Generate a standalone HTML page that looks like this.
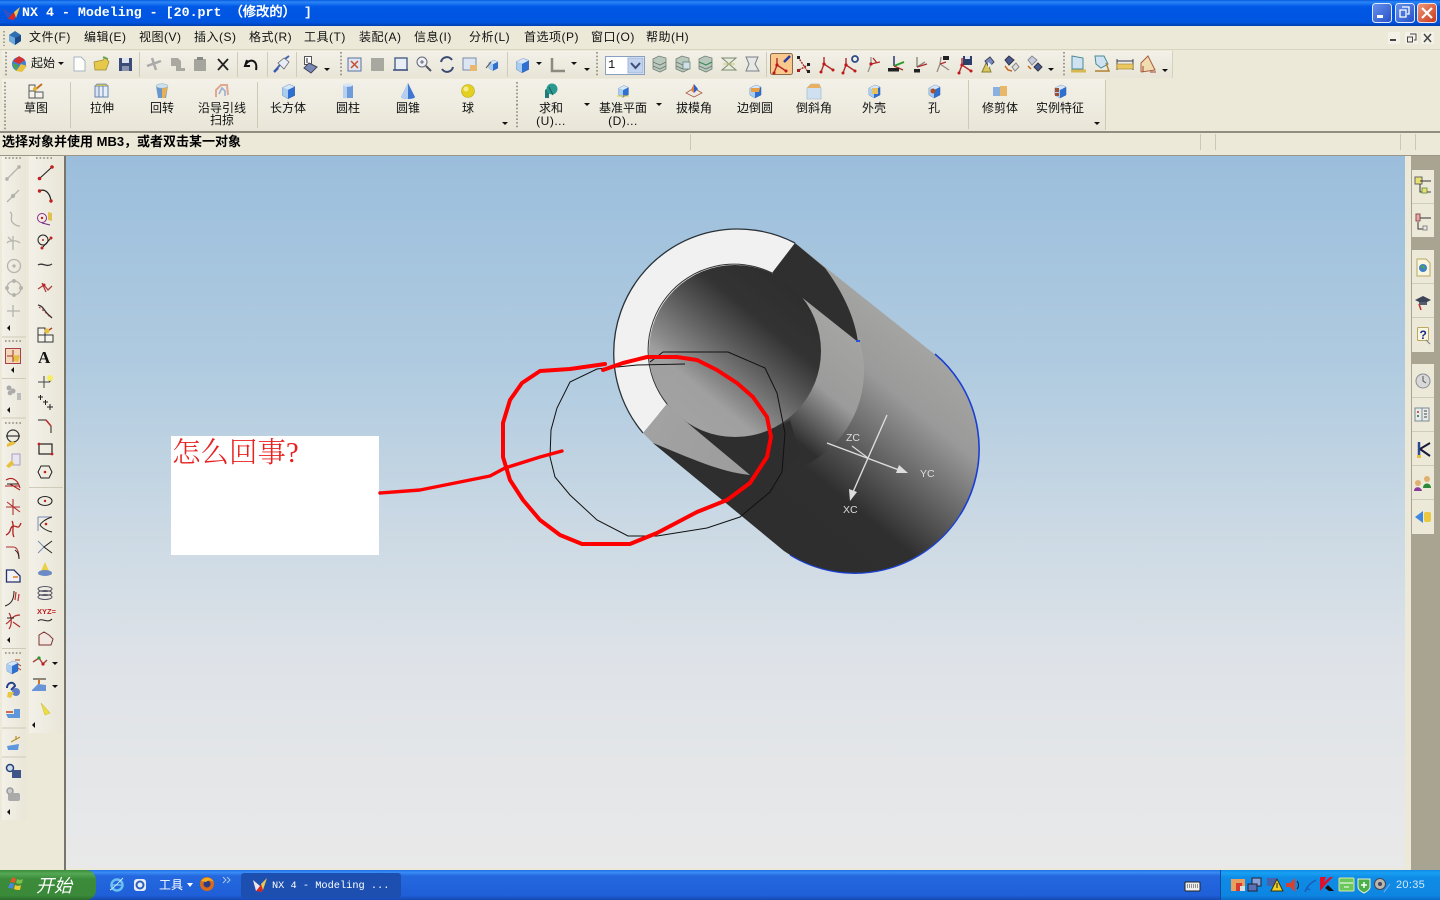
<!DOCTYPE html>
<html lang="zh"><head><meta charset="utf-8"><title>NX 4 - Modeling</title>
<style>
html,body{margin:0;padding:0;width:1440px;height:900px;overflow:hidden;background:#ece9d8}
body{position:relative;font-family:"Liberation Sans","WenQuanYi Zen Hei","Noto Sans CJK SC",sans-serif;font-size:12px;color:#111}
.b{position:absolute}
.t{position:absolute;white-space:nowrap;line-height:14px;font-size:12px}
.m{letter-spacing:.5px}
.c{transform:translateX(-50%);text-align:center}
svg{position:absolute;left:0;top:0}
</style></head><body>
<div class="b" style="left:0;top:0;width:1440px;height:26px;background:linear-gradient(#0a5be0 0,#2a86f5 8%,#0058e6 25%,#0055e0 85%,#0040b0 100%)"></div>
<div class="b" style="left:0;top:26px;width:1440px;height:24px;background:#ece9d8"></div>
<div class="b" style="left:0;top:49px;width:1440px;height:1px;background:#d8d4c2"></div>
<div class="b" style="left:2px;top:51px;width:1170px;height:27px;background:linear-gradient(#f3f1e8,#e8e5d7);border-right:1px solid #d5d1bf"></div>
<div class="b" style="left:2px;top:79px;width:1103px;height:52px;background:linear-gradient(#f3f1e8,#e9e6d8)"></div>
<div class="b" style="left:0;top:131px;width:1440px;height:2px;background:#8f8c80"></div>
<div class="b" style="left:0;top:133px;width:1440px;height:17px;background:#ece9d8"></div>
<div class="b" style="left:0;top:150px;width:1440px;height:6px;background:#ece9d8;border-bottom:1px solid #9a978a;box-sizing:border-box"></div>
<div class="b" style="left:690px;top:134px;width:1px;height:16px;background:#cbc8b8"></div>
<div class="b" style="left:1200px;top:134px;width:1px;height:16px;background:#cbc8b8"></div>
<div class="b" style="left:1215px;top:134px;width:1px;height:16px;background:#cbc8b8"></div>
<div class="b" style="left:1400px;top:134px;width:1px;height:16px;background:#cbc8b8"></div>
<div class="b" style="left:1415px;top:134px;width:1px;height:16px;background:#cbc8b8"></div>
<!-- left panels -->
<div class="b" style="left:0;top:156px;width:65px;height:714px;background:#ece9d8"></div>
<div class="b" style="left:64px;top:156px;width:2px;height:714px;background:#77756c"></div>
<div class="b" style="left:2px;top:156px;width:24px;height:664px;background:linear-gradient(90deg,#f3f1e8,#e9e6d8)"></div>
<div class="b" style="left:29px;top:156px;width:34px;height:577px;background:linear-gradient(90deg,#f3f1e8,#e9e6d8)"></div>
<!-- viewport -->
<div class="b" style="left:66px;top:156px;width:1339px;height:712px;background:linear-gradient(#9bbedc 0,#b0cbe0 30%,#cbd9e4 52%,#dfe3e8 72%,#e9e9e9 100%)"></div>
<div class="b" style="left:66px;top:868px;width:1345px;height:2px;background:#ece9d8"></div>
<!-- right panel -->
<div class="b" style="left:1405px;top:156px;width:6px;height:714px;background:#ece9d8"></div>
<div class="b" style="left:1411px;top:156px;width:29px;height:714px;background:#a8a491"></div>
<div class="b" style="left:1412px;top:170px;width:22px;height:33px;background:#ece9d8;border-bottom:1px solid #cfccbc"></div>
<div class="b" style="left:1412px;top:204px;width:22px;height:33px;background:#ece9d8"></div>
<div class="b" style="left:1412px;top:250px;width:22px;height:33px;background:#ece9d8;border-bottom:1px solid #cfccbc"></div>
<div class="b" style="left:1412px;top:284px;width:22px;height:33px;background:#ece9d8;border-bottom:1px solid #cfccbc"></div>
<div class="b" style="left:1412px;top:318px;width:22px;height:34px;background:#ece9d8"></div>
<div class="b" style="left:1412px;top:364px;width:22px;height:33px;background:#ece9d8;border-bottom:1px solid #cfccbc"></div>
<div class="b" style="left:1412px;top:398px;width:22px;height:33px;background:#ece9d8;border-bottom:1px solid #cfccbc"></div>
<div class="b" style="left:1412px;top:432px;width:22px;height:33px;background:#ece9d8;border-bottom:1px solid #cfccbc"></div>
<div class="b" style="left:1412px;top:466px;width:22px;height:33px;background:#ece9d8;border-bottom:1px solid #cfccbc"></div>
<div class="b" style="left:1412px;top:500px;width:22px;height:34px;background:#ece9d8"></div>
<!-- taskbar -->
<div class="b" style="left:0;top:870px;width:1440px;height:30px;background:linear-gradient(#1f6fe8 0,#3a8cf5 8%,#2468de 20%,#1f5fd8 85%,#1848b0 100%)"></div>
<div class="b" style="left:0;top:870px;width:96px;height:30px;border-radius:0 10px 10px 0;background:linear-gradient(#3a8f3a 0,#55a855 12%,#3b8b3b 30%,#3a8a3a 85%,#2a6a2a 100%)"></div>
<div class="b" style="left:241px;top:873px;width:160px;height:25px;border-radius:3px;background:#1c4fb0"></div>
<div class="b" style="left:1220px;top:870px;width:220px;height:30px;background:linear-gradient(#0e8be8 0,#18a0f2 10%,#0f8ce6 25%,#0d86e2 85%,#0a6cc8 100%);border-left:1px solid #0a4aa0;box-sizing:border-box"></div>

<svg width="1440" height="900" viewBox="0 0 1440 900" xmlns="http://www.w3.org/2000/svg">
<defs>
<linearGradient id="gb" gradientUnits="userSpaceOnUse" x1="934" y1="354" x2="776" y2="546"><stop offset="0" stop-color="#a4a4a2"/><stop offset=".22" stop-color="#9a9a9a"/><stop offset=".68" stop-color="#2f2f2f"/><stop offset="1" stop-color="#2e2e2e"/></linearGradient>
<linearGradient id="gh" gradientUnits="userSpaceOnUse" x1="680" y1="417" x2="790" y2="285"><stop offset="0" stop-color="#a2a2a2"/><stop offset=".2" stop-color="#a0a0a0"/><stop offset=".3" stop-color="#888"/><stop offset=".55" stop-color="#555"/><stop offset=".73" stop-color="#333"/><stop offset="1" stop-color="#2e2e2e"/></linearGradient>
<linearGradient id="gc" gradientUnits="userSpaceOnUse" x1="860" y1="330" x2="780" y2="427"><stop offset="0" stop-color="#a6a6a4"/><stop offset=".55" stop-color="#9b9b9b"/><stop offset="1" stop-color="#2f2f2f"/></linearGradient>
<linearGradient id="gw" gradientUnits="userSpaceOnUse" x1="650" y1="420" x2="750" y2="480"><stop offset="0" stop-color="#a2a2a2"/><stop offset="1" stop-color="#9c9c9c"/></linearGradient>
<linearGradient id="tb" x1="0" y1="0" x2="1" y2="1"><stop offset="0" stop-color="#6a93ea"/><stop offset="1" stop-color="#2450c8"/></linearGradient>
<linearGradient id="tr" x1="0" y1="0" x2="1" y2="1"><stop offset="0" stop-color="#ef9a7a"/><stop offset="1" stop-color="#c8361a"/></linearGradient>
<g id="cube"><path d="M-5 -3 L1 -6 L6 -4 L6 4 L0 7 L-5 4Z" fill="#2f6fd0" stroke="#2a5aa8" stroke-width=".5"/><path d="M-5 -3 L0 -1 L0 7 L-5 4Z" fill="#a9cdf0"/><path d="M-5 -3 L1 -6 L6 -4 L0 -1Z" fill="#d5e6f7"/></g>
<g id="csy"><path d="M-3 -1 L-6 7 M-3 -1 L6 5 M-3 -1 L-3 -8" stroke="#b02c2c" stroke-width="1.400" fill="none"/><circle cx="-3" cy="-1" r="1.600" fill="#c01818"/><circle cx="-6" cy="7" r="1.500" fill="#c01818"/><circle cx="6" cy="5" r="1.500" fill="#c01818"/></g>
<g id="stk"><path d="M-7 -5 L-1 -8 L6 -6 L6 5 L0 8 L-7 5Z" fill="#b8c8bc" stroke="#727e74" stroke-width=".8"/><path d="M-7 -2 L0 1 L6 -2 M-7 2 L0 5 L6 2" stroke="#6c786e" fill="none" stroke-width=".9"/></g>
<g id="grip"><path d="M0 0 V24" stroke="#8a8878" stroke-width="1.6" stroke-dasharray="1.6 2"/></g>
<g id="gh2"><path d="M0 0 H18" stroke="#8a8878" stroke-width="1.4" stroke-dasharray="1.6 2"/></g>
<path id="ad" d="M-3 0 H3 L0 3Z" fill="#111"/>
<path id="al" d="M2 -3 V3 L-1 0Z" fill="#111"/>
</defs>

<!-- 3D model -->
<path d="M795 243 L933 353 A124 124 0 0 1 784 551 L653 443 Z" fill="url(#gb)"/>
<clipPath id="cb"><path d="M795 243 L933 353 A124 124 0 0 1 784 551 L643 433 L667 403 L773 272Z"/></clipPath>
<circle cx="759" cy="371" r="105" fill="url(#gc)" clip-path="url(#cb)"/>
<path d="M653 443 L660 410 L735 470 L784 480 L720 498Z" fill="#2e2e2e"/>
<path d="M678 415 C695 430 715 438 735 437 C755 437 775 431 790 420 L800 455 L775 476 L750 475Z" fill="#2e2e2e"/>
<path d="M795 243 A124 124 0 0 0 643 433 L667 404 L772 273 Z" fill="#f1f1f1"/>
<path d="M795 243 A124 124 0 0 0 643 433" fill="none" stroke="#2a3238" stroke-width="1.300"/>
<circle cx="735" cy="351" r="86" fill="url(#gh)"/>
<path d="M772 273 A86 86 0 0 0 667 404" fill="none" stroke="#333" stroke-width="1"/>
<path d="M795 243 L772 273 L780 280 L858 342 C855 320 845 295 825 268 Z" fill="#2f2f2f"/>
<path d="M678 415 L750 475 C720 472 690 458 653 443 L643 433 L667 404Z" fill="url(#gw)"/>
<path d="M935 354 A124 124 0 0 1 960 515" fill="none" stroke="#1a3fd0" stroke-width="1.600"/>
<path d="M960 515 A124 124 0 0 1 790 555" fill="none" stroke="#1a3fd0" stroke-width="1.300"/>
<rect x="856" y="340" width="4" height="2" fill="#2a4fe0"/>
<path d="M827 443 L899 470" stroke="#ddd" stroke-width="1.400"/><path d="M908 473 L896 473 L899 465Z" fill="#ddd"/>
<path d="M887 415 L853 492" stroke="#ddd" stroke-width="1.400"/><path d="M850 501 L849 489 L857 492Z" fill="#ddd"/>
<path d="M852 446 L868 458" stroke="#ddd" stroke-width="1.100"/>
<text x="846" y="441" font-family="Liberation Sans" font-size="10.500" fill="#dcdcdc">ZC</text>
<text x="920" y="477" font-family="Liberation Sans" font-size="10.500" fill="#dcdcdc">YC</text>
<text x="843" y="513" font-family="Liberation Sans" font-size="10.500" fill="#dcdcdc">XC</text>
<path d="M685 364 L637 365 L597 369 L570 382 L557 408 L551 430 L550 457 L555 477 L570 495 L597 520 L628 536 L657 536 L707 528 L740 517 L770 492 L782 472 L785 433 L777 393 L765 368 L728 352 L663 352 L650 362" fill="none" stroke="#111" stroke-width="1"/>
<rect x="171" y="436" width="208" height="119" fill="#fff"/>
<path d="M380 493 L420 490 L460 482 L490 476 L505 468 L540 457 L562 451" fill="none" stroke="#f00" stroke-width="3.400" stroke-linecap="round" stroke-linejoin="round"/>
<path d="M605 364 L570 369 L540 371 L522 383 L510 400 L503 423 L503 457 L510 480 L523 500 L540 520 L560 535 L582 544 L630 544 L657 533 L697 512 L727 500 L750 483 L767 457 L771 437 L767 417 L753 397 L737 383 L717 370 L697 360 L677 357 L647 357 L623 363 L603 370" fill="none" stroke="#f00" stroke-width="4" stroke-linecap="round" stroke-linejoin="round"/>

<!-- title bar -->
<path d="M3 9 L12 14 L20 7 L14 20 L8 19Z" fill="#d62828"/><path d="M3 9 L12 14 L8 19Z" fill="#2a55c8"/><path d="M14 12 L20 7 L16 18Z" fill="#e8c850"/>
<rect x="1372.500" y="3.500" width="19" height="19" rx="3" fill="url(#tb)" stroke="#dfe8ff"/><rect x="1377" y="15" width="6" height="3" fill="#fff"/>
<rect x="1395.500" y="3.500" width="19" height="19" rx="3" fill="url(#tb)" stroke="#dfe8ff"/><path d="M1402 7h7v7h-2M1400 10h6v7h-6z" fill="none" stroke="#fff" stroke-width="1.300"/>
<rect x="1417.500" y="3.500" width="19" height="19" rx="3" fill="url(#tr)" stroke="#f5e0d8"/><path d="M1422 8 L1432 18 M1432 8 L1422 18" stroke="#fff" stroke-width="2.200"/>
<!-- MDI -->
<rect x="1388" y="32" width="12" height="12" fill="#f4f2e8"/><rect x="1390" y="39" width="6" height="2" fill="#444"/>
<rect x="1405" y="32" width="13" height="12" fill="#f4f2e8"/><path d="M1410 34h6v6h-2M1407.500 37h5v5h-5z" fill="none" stroke="#444"/>
<rect x="1421" y="32" width="13" height="12" fill="#f4f2e8"/><path d="M1424 34 L1431 42 M1431 34 L1424 42" stroke="#444" stroke-width="1.500"/>
<!-- menu grip + icon -->
<path d="M4 31 V46" stroke="#8a8878" stroke-width="1.500" stroke-dasharray="1.500 2"/>
<g transform="translate(15,38)"><path d="M-6 -3 L0 -7 L6 -3 L6 3 L0 7 L-6 3Z" fill="#2f6fb0"/><path d="M-6 -3 L0 0 L0 7 L-6 3Z" fill="#6fa8dc"/><path d="M0 0 L6 -3 L6 3 L0 7Z" fill="#1a4a88"/></g>

<!-- toolbar row -->
<use href="#grip" x="6" y="52"/>
<g transform="translate(19,64)"><circle r="7" fill="#3f7fd0"/><path d="M-6 -3 L0 -8 L6 -4 L0 0Z" fill="#d83030"/><path d="M-3 7 L2 0 L8 2 L3 8Z" fill="#e8c040"/><path d="M-7 -1 L-1 1 L-3 7Z" fill="#48a848"/></g>
<use href="#ad" x="61" y="62"/>
<path d="M74 57 H81 L85 61 V71 H74Z" fill="#fdfdfa" stroke="#a8b4c0"/>
<path d="M94 62 L103 60 L105 57 L109 62 L106 70 L95 70Z" fill="#e6c84a" stroke="#9a8830" stroke-width=".7"/><path d="M103 57 L108 59" stroke="#5aa050" stroke-width="1.500"/>
<rect x="119" y="58" width="13" height="13" fill="#3c4c78"/><rect x="122" y="58" width="7" height="5" fill="#dfe4ee"/><rect x="122" y="66" width="7" height="5" fill="#8a94b0"/>
<path d="M147 66 L161 61 M152 58 L156 70" stroke="#aaa" stroke-width="2.500"/>
<path d="M171 58 h7 l3 3 v7 h4 v3 h-9 v-5 h-5z" fill="#a9a9a2"/>
<path d="M194 59 h12 v12 h-12z" fill="#a5a59e"/><rect x="197" y="57" width="6" height="3" fill="#888"/>
<path d="M218 59 L228 70 M228 59 L218 70" stroke="#222" stroke-width="1.800"/>
<path d="M247 60 L245 66 L250 66 M246 64 C250 58 258 60 256 70" fill="none" stroke="#111" stroke-width="2"/>
<path d="M275 71 L279 66 L285 59 L289 56" stroke="#4466b8" stroke-width="2" fill="none"/><path d="M278 63 L284 69 L289 62 L284 58Z" fill="#e8ecf4" stroke="#667" stroke-width=".8"/><path d="M274 72 L278 68" stroke="#3858b0" stroke-width="2.500"/>
<rect x="304.500" y="56.500" width="7" height="8" fill="#fff" stroke="#555"/><path d="M307 58 v5" stroke="#222"/><path d="M309 63 L317 67 L311 73 L304 68Z" fill="#7a8ab8" stroke="#445"/>
<use href="#ad" x="327" y="68"/>
<path d="M139.500 52V77M237.500 52V77M267.500 52V77M296.500 52V77M507.500 52V77M766.500 52V77" stroke="#cfcbb8"/>
<use href="#grip" x="341" y="52"/><use href="#grip" x="597" y="52"/><use href="#grip" x="1064" y="52"/>
<rect x="348" y="58" width="13" height="13" fill="#dfe6f0" stroke="#5870a0"/><path d="M351 61 L358 68 M358 61 L351 68" stroke="#c85030" stroke-width="1.500"/>
<rect x="371" y="58" width="13" height="13" fill="#a8a8a0"/>
<rect x="395" y="58" width="12" height="12" fill="#e8eef6" stroke="#40557e" stroke-width="1.300"/><path d="M393 70 h15" stroke="#40557e" stroke-width="1.500"/>
<circle cx="422" cy="62" r="5" fill="#eef2f6" stroke="#667"/><path d="M426 66 L431 71" stroke="#556" stroke-width="2"/><path d="M420 62h4M422 60v4" stroke="#667"/>
<path d="M452 60 A6 6 0 0 0 441 62 M442 69 A6 6 0 0 0 453 67" fill="none" stroke="#3a4a70" stroke-width="2"/>
<rect x="463" y="58" width="13" height="12" fill="#dce6f2" stroke="#7a8aa8"/><path d="M470 65 h7 v6 h-7z" fill="#e8b870"/>
<g transform="translate(493,65) scale(.8)"><use href="#cube"/></g><path d="M486 68 L491 62" stroke="#555"/>
<g transform="translate(522,65) scale(1.100)"><use href="#cube"/></g><use href="#ad" x="539" y="62"/>
<path d="M552 58 V71 H565" fill="none" stroke="#8a8a80" stroke-width="2.500"/><use href="#ad" x="574" y="62"/><use href="#ad" x="587" y="68"/>
<rect x="605.500" y="56.500" width="39" height="18" fill="#fff" stroke="#8aa0c0"/><rect x="628" y="58" width="15" height="15" fill="#c2d3f0" stroke="#a0b4d8"/><path d="M631 63 L635.500 68 L640 63" fill="none" stroke="#3d4f78" stroke-width="2"/>
<use href="#stk" x="660" y="64"/><use href="#stk" x="683" y="64"/><rect x="683" y="62" width="7" height="7" fill="#cfe0e8" stroke="#5a7a6a" stroke-width=".7"/><g transform="translate(706,64)"><use href="#stk"/><path d="M-7 -2 L0 1 L6 -2" stroke="#3a8a5a" fill="none"/></g>
<g transform="translate(729,64)"><path d="M-7 -6 L7 -6 L0 0Z M-7 6 L7 6 L0 0Z" fill="#e8ecd8" stroke="#7a8a72"/><path d="M-6 0 H6" stroke="#c8c870"/></g>
<g transform="translate(752,64)"><path d="M-6 -7 H6 L3 0 L7 7 H-6 L-3 0Z" fill="#e6e8e6" stroke="#7a8088"/></g>
<rect x="770.500" y="53.500" width="22" height="21" rx="2" fill="#f8c88c" stroke="#8a6a48"/>
<use href="#csy" x="780" y="66"/><path d="M784 62 L790 56" stroke="#2a3aa0" stroke-width="2.500"/>
<g transform="translate(804,65)"><path d="M-6 -8 L4 7 M-5 5 L6 -1" stroke="#a02020" fill="none" stroke-dasharray="2 1" stroke-width="1.400"/><rect x="-7" y="-9" width="3" height="3" fill="#222"/><rect x="3" y="5" width="3" height="3" fill="#222"/><rect x="-7" y="4" width="3" height="3" fill="#a02020"/><rect x="3" y="-2" width="3" height="3" fill="#222"/></g>
<use href="#csy" x="827" y="65"/><use href="#csy" x="849" y="66"/><circle cx="855" cy="59" r="3" fill="none" stroke="#2a4a88" stroke-width="1.800"/>
<g transform="translate(874,65)"><path d="M-3 -1 L-6 7 M-3 -1 L-3 -8" stroke="#9a9a90" stroke-width="1.400" fill="none"/><path d="M-3 -1 L6 -3 M-1 -7 L3 -2" stroke="#b02c2c" stroke-width="1.400" fill="none"/><circle cx="-3" cy="-1" r="1.600" fill="#c01818"/></g>
<g transform="translate(897,64)"><path d="M-3 -8 V2" stroke="#1a2a6a" stroke-width="1.400"/><path d="M-3 2 L7 -2" stroke="#2a9a2a" stroke-width="1.800"/><path d="M-3 2 L6 6" stroke="#b02c2c" stroke-width="1.400"/><rect x="-9" y="4" width="11" height="3.500" fill="#222"/></g>
<g transform="translate(920,65)"><path d="M-3 -8 V2 M-3 2 L5 -3" stroke="#8a8a84" stroke-width="1.400"/><path d="M-3 2 L7 -1" stroke="#b02c2c" stroke-width="1.400"/><rect x="-6" y="4" width="6" height="3.500" fill="#222"/></g>
<g transform="translate(943,65)"><path d="M-3 -1 L-6 7 M-3 -1 L-2 -8 M-3 -1 L6 5" stroke="#9a8a84" stroke-width="1.300" fill="none"/><path d="M-3 -1 L3 -3" stroke="#b02c2c" stroke-width="1.400"/><rect x="0" y="-9" width="6" height="4" fill="#222"/></g>
<use href="#csy" x="965" y="66"/><rect x="963" y="56" width="9" height="9" fill="#2c3e6a"/><rect x="965" y="56" width="5" height="3" fill="#dfe4ee"/>
<g transform="translate(988,65)"><path d="M-6 7 L-1 -4 L3 7Z" fill="#d8c860" stroke="#8a8030"/><path d="M-3 -4 L2 -8 L6 -3 L1 2Z" fill="#7a8ac0" stroke="#445"/><path d="M0 -3 L4 0 L0 3Z" fill="#e8f0f8"/></g>
<g transform="translate(1011,64)"><path d="M-6 -4 L-2 -8 L3 -4 L-2 1Z" fill="#4a5a90" stroke="#334"/><path d="M1 3 L5 -1 L8 3 L4 7Z" fill="#dcdcd8" stroke="#888"/><path d="M-6 2 L-3 6 L1 7" stroke="#c86820" stroke-width="1.500" fill="none"/></g>
<g transform="translate(1034,64)"><path d="M-6 -4 L-2 -8 L3 -4 L-2 1Z" fill="#c8ccd8" stroke="#889"/><path d="M0 3 L4 -1 L8 3 L4 7Z" fill="#4a5a90" stroke="#334"/><path d="M-6 2 L-3 5" stroke="#c86820" stroke-width="1.500" fill="none"/></g>
<use href="#ad" x="1051" y="68"/>
<g transform="translate(1078,64)"><path d="M-6 -8 L5 -6 L5 5 L-6 5Z" fill="#cfe2f2" stroke="#4a8a98"/><path d="M-7 7 H8" stroke="#d8b850" stroke-width="3"/></g>
<g transform="translate(1101,64)"><path d="M-6 -8 L3 -8 L7 0 L0 4 L-5 0Z" fill="#cfe2f2" stroke="#4a8a98"/><path d="M-6 7 H8 L5 -1" stroke="#b08030" stroke-width="1.400" fill="none"/></g>
<path d="M1117 59 V70 M1133 59 V70" stroke="#444"/><path d="M1117 61 H1133" stroke="#335"/><rect x="1117" y="64" width="16" height="5" fill="#ecc860" stroke="#a08030" stroke-width=".6"/>
<path d="M1141 72 L1141 63 L1148 56 L1155 70 L1141 72" fill="#f0dcae" stroke="#a86040"/><path d="M1143 72 L1143 66 M1150 72 H1156" stroke="#a04030"/>
<use href="#ad" x="1165" y="69"/>

<!-- feature toolbar -->
<use href="#grip" x="5" y="82"/><use href="#grip" x="5" y="106"/>
<g transform="translate(36,91)"><rect x="-7" y="-6" width="6" height="6" fill="#f4f4ec" stroke="#555"/><rect x="-7" y="0" width="6" height="7" fill="#f4f4ec" stroke="#555"/><rect x="-1" y="1" width="8" height="6" fill="#f4f4ec" stroke="#555"/><path d="M0 -2 L6 -7" stroke="#c07020" stroke-width="2"/><circle cx="-1" cy="-2" r="2" fill="#e0b030"/></g>
<g transform="translate(102,91)"><rect x="-7" y="-5" width="4" height="11" fill="#d8e4f2" stroke="#6a84b0"/><rect x="-3" y="-5" width="9" height="11" fill="#e6eef8" stroke="#6a84b0"/><path d="M1 -5 V6" stroke="#6a84b0"/><path d="M-7 -5 L-5 -7 H4 L6 -5" fill="#c8c060" stroke="#6a84b0" stroke-width=".7"/></g>
<g transform="translate(162,91)"><path d="M-6 -5 H6 L4 7 H-4Z" fill="#6a96d0"/><path d="M0 -5 H6 L3 7 H0Z" fill="#e8b050"/><ellipse cy="-5" rx="6" ry="2.200" fill="#cfe0f0" stroke="#8aa" stroke-width=".5"/></g>
<g transform="translate(222,91)"><path d="M-6 6 L-6 -1 L-1 -6 L5 -6 L6 4" fill="none" stroke="#e0a890" stroke-width="2"/><path d="M-3 3 L0 -3 L3 0 L3 5" fill="none" stroke="#9ab0d0" stroke-width="1.600"/></g>
<g transform="translate(288,91) scale(1.100)"><use href="#cube"/></g>
<g transform="translate(348,91)"><rect x="-5" y="-6" width="10" height="13" fill="#6d9bdc"/><rect x="-5" y="-6" width="4" height="13" fill="#b7d0f0"/><ellipse cy="-6" rx="5" ry="1.700" fill="#d9e6f6"/></g>
<g transform="translate(408,91)"><path d="M0 -8 L7 6 A7 2 0 0 1 -7 6Z" fill="#3f78d0"/><path d="M0 -8 L0 8 A7 2 0 0 1 -7 6Z" fill="#b4cff0"/></g>
<circle cx="468" cy="91" r="6.500" fill="#e4d020" stroke="#b8a820" stroke-width=".6"/><circle cx="466" cy="89" r="2.500" fill="#f6ec90"/>
<use href="#ad" x="505" y="122"/>
<path d="M70.500 82V128M257.500 82V128M968.500 80V129M1105.500 80V130" stroke="#cdc9b6"/>
<use href="#grip" x="517" y="82"/><use href="#grip" x="517" y="104"/>
<g transform="translate(551,91)"><path d="M-6 -1 L-2 -4 L-2 7 L-6 7Z" fill="#1f7a78"/><circle cx="1" cy="-2" r="5.500" fill="#2a9a90"/><path d="M-2 -4 L2 4" stroke="#175c5a"/></g>
<use href="#ad" x="587" y="103"/>
<g transform="translate(623,91) scale(.9)"><use href="#cube"/></g><path d="M617 96 L629 96" stroke="#e0c840"/>
<use href="#ad" x="659" y="103"/>
<g transform="translate(694,90)"><path d="M-8 3 L0 -2 L8 3 L0 7Z" fill="#f0e8e0" stroke="#a86040" stroke-width=".8"/><path d="M-3 0 L0 -6 L4 -1 L0 3Z" fill="#2f5fc8"/><path d="M-3 0 L0 -6 L0 3Z" fill="#e08040"/></g>
<g transform="translate(755,91)"><use href="#cube"/><path d="M-4 -3 L5 -3 L4 1 L-4 1Z" fill="#e8a040"/></g>
<g transform="translate(814,91)"><path d="M-7 -3 L-3 -7 L5 -7 L7 -3 L7 8 L-7 8Z" fill="#cfe0f0" stroke="#9ab0c8" stroke-width=".6"/><path d="M-7 -3 L-3 -7 L5 -7 L7 -3Z" fill="#e8b060"/></g>
<g transform="translate(874,91)"><use href="#cube"/><path d="M-2 -3 L4 -3 L4 3 L-2 3Z" fill="#e8c060"/></g>
<g transform="translate(934,91)"><use href="#cube"/><circle cx="-1" cy="0" r="2.500" fill="#b05020"/></g>
<g transform="translate(1000,91)"><rect x="-7" y="-4" width="7" height="9" fill="#8ab0e0"/><rect x="0" y="-5" width="7" height="10" fill="#e8b868"/></g>
<g transform="translate(1060,91)"><use href="#cube"/><rect x="-5" y="-3" width="4" height="4" fill="#a05030"/><rect x="-5" y="2" width="4" height="3" fill="#a05030"/></g>
<use href="#ad" x="1097" y="122"/>

<!-- left col 1 -->
<use href="#gh2" x="5" y="158"/>
<g stroke="#b5b5ae" fill="none" stroke-width="1.300">
<path d="M7 179 L19 167"/><circle cx="19" cy="167" r="1.200" fill="#aaa"/><circle cx="7" cy="179" r="1.200" fill="#aaa"/>
<path d="M7 202 L19 190"/><circle cx="13" cy="196" r="1.500" fill="#aaa"/>
<path d="M10 212 C14 214 9 220 13 223 C16 226 18 226 20 226"/>
<path d="M7 243 C9 240 17 240 20 243 M13 236 V250 M8 237 L13 242"/>
<circle cx="14" cy="266" r="6.500"/><circle cx="14" cy="266" r="1" fill="#aaa"/>
<circle cx="14" cy="288" r="7"/><circle cx="14" cy="281" r="1.300" fill="#aaa"/><circle cx="14" cy="295" r="1.300" fill="#aaa"/><circle cx="7" cy="288" r="1.300" fill="#aaa"/><circle cx="21" cy="288" r="1.300" fill="#aaa"/>
<path d="M7 311 H20 M13 305 V317"/>
</g>
<use href="#al" x="8" y="328"/>
<path d="M2 337 H26 M2 378.500 H26 M2 418 H26 M2 648.500 H26 M2 728 H26 M2 757 H26" stroke="#cfcbb8"/>
<use href="#gh2" x="5" y="341"/>
<rect x="5.500" y="348.500" width="15" height="15" fill="#f3d8b8" stroke="#a84050"/><path d="M7 356 H19 M13 350 V362" stroke="#a03030"/><path d="M13 355 L20 356 L18 362 L14 361Z" fill="#e8c040"/>
<use href="#al" x="12" y="370"/>
<g fill="#aaa"><circle cx="9" cy="388" r="2.500"/><circle cx="13" cy="391" r="2.500"/><circle cx="10" cy="393" r="2.300"/><rect x="17" y="393" width="4" height="7" fill="#bbb"/></g>
<use href="#al" x="8" y="410"/>
<use href="#gh2" x="5" y="423"/>
<g fill="none" stroke="#333" stroke-width="1.200"><circle cx="13" cy="436" r="6"/><path d="M6 436 H20"/></g><path d="M7 444 L12 441 L16 443 L13 445 L7 447Z" fill="#e8c040"/>
<rect x="12" y="454" width="8" height="11" fill="#e8e4f0" stroke="#a8a0c0" /><path d="M6 466 L12 460 L14 464 L9 468Z" fill="#e8c040"/>
<path d="M6 480 C12 476 18 480 20 488 M5 486 H19 M10 484 L20 490" fill="none" stroke="#b02020" stroke-width="1.100"/><path d="M7 484 H18" stroke="#222"/>
<path d="M13 499 V515 M6 507 H20 M7 502 L20 512" stroke="#b03030" fill="none" stroke-width="1.100"/>
<path d="M6 535 C12 532 9 528 13 526 C18 526 18 530 21 523 M12 521 C15 526 11 532 14 537" stroke="#b02020" fill="none" stroke-width="1.300"/>
<path d="M6 547 H13 C17 547 19 551 19 559" stroke="#b03030" fill="none" stroke-width="1"/><path d="M15 550 C18 552 19 555 19 559" stroke="#222" fill="none"/>
<path d="M6.500 570 H14 L20 576 V582 H6.500Z" fill="#f2f2f6" stroke="#23306a" stroke-width="1.300"/><path d="M13 577 h5" stroke="#d88020" stroke-width="1.500"/>
<path d="M5 606 C11 604 14 600 14 591" stroke="#222" fill="none"/><path d="M16 592 L15 600 M19 594 L18 601" stroke="#c03030" stroke-width="1.200"/>
<path d="M6 624 C12 620 12 615 20 615 M13 622 L20 627 M9 613 C12 617 12 625 9 629" stroke="#b03030" fill="none" stroke-width="1.200"/><path d="M7 618 H14" stroke="#222"/>
<use href="#al" x="8" y="640"/>
<use href="#gh2" x="5" y="653"/>
<use href="#cube" x="12" y="667"/><path d="M15 660 L20 660 M18 664 L21 666 M18 668 L21 670" stroke="#b04020"/>
<path d="M7 688 C7 682 14 681 15 686 L11 690" fill="none" stroke="#24408a" stroke-width="2"/><circle cx="16" cy="692" r="4" fill="#5f80c8"/><path d="M8 692 L14 692 L11 698 L7 697Z" fill="#e8c840"/>
<path d="M6 714 H14 L14 709 L20 709 L20 718 L8 718Z" fill="#5f97dc"/><path d="M6 712 L13 712" stroke="#c04020" stroke-width="1.500"/>
<path d="M7 746 L19 744 L18 750 L8 750Z" fill="#5f97dc"/><path d="M11 742 L20 737 M16 740 V736" stroke="#b89028" stroke-width="1.200"/>
<circle cx="10" cy="768" r="3.500" fill="#d0dce8" stroke="#24407a" stroke-width="1.500"/><rect x="12" y="770" width="9" height="8" fill="#3f5588"/>
<circle cx="10" cy="791" r="3" fill="#ccc" stroke="#999" stroke-width="1.500"/><rect x="8" y="793" width="12" height="8" rx="2" fill="#aaa"/>
<use href="#al" x="8" y="812"/>

<!-- left col 2 -->
<use href="#gh2" x="36" y="158"/>
<path d="M39 179 L52 167" stroke="#222" stroke-width="1.100"/><circle cx="39.500" cy="178.500" r="1.800" fill="#c02020"/><circle cx="52" cy="167" r="1.800" fill="#c02020"/>
<path d="M39 191 C45 188 50 193 51 201" stroke="#222" fill="none" stroke-width="1.200"/><circle cx="39.500" cy="191" r="1.700" fill="#c02020"/><circle cx="51" cy="201" r="1.700" fill="#c02020"/>
<circle cx="42" cy="218" r="4.500" fill="none" stroke="#8a2a8a"/><circle cx="42" cy="218" r="1.200" fill="#c02020"/><path d="M42 223 L50 225" stroke="#6a2a8a"/><path d="M48 212 L52 213 L52 221 L48 220Z" fill="#e0c050"/>
<circle cx="43" cy="240" r="5" fill="none" stroke="#222"/><path d="M42 248 L51 238" stroke="#222"/><circle cx="43" cy="240" r="1" fill="#c02020"/><circle cx="42" cy="248" r="1.500" fill="#c02020"/><circle cx="51" cy="238" r="1.500" fill="#c02020"/>
<path d="M38 265 C43 262 46 268 52 264" stroke="#333" fill="none" stroke-width="1.300"/>
<path d="M38 289 L44 285 L48 290 L52 286 M42 283 L46 292" stroke="#b04040" stroke-width="1.300" fill="none"/><circle cx="44" cy="285" r="1.500" fill="#c02020"/>
<path d="M38 305 C44 306 44 312 50 316 L52 318" stroke="#333" fill="none" stroke-width="1.300"/><path d="M39 307 L45 312 L50 317" stroke="#a03030" stroke-dasharray="2 2" fill="none"/>
<rect x="38" y="328" width="7" height="7" fill="#f4f4ec" stroke="#333"/><rect x="38" y="335" width="7" height="7" fill="#f4f4ec" stroke="#333"/><rect x="45" y="335" width="8" height="7" fill="#f4f4ec" stroke="#333"/><path d="M46 332 L52 328" stroke="#b04020" stroke-width="1.500"/><circle cx="47" cy="331" r="2.500" fill="#e8c040"/>
<text x="38" y="363" font-family="Liberation Serif" font-weight="700" font-size="17" fill="#111">A</text>
<path d="M38 382 H50 M44 376 V388" stroke="#444"/><circle cx="50" cy="380" r="1.500" fill="#222"/><circle cx="50" cy="378" r="3" fill="#f4ee60"/>
<path d="M38 397 h5 M40.500 395 v5 M43 402 h5 M45.500 400 v5 M47 407 h6 M50 404 v6" stroke="#222"/>
<path d="M38 420 H46 L51 426 V433" stroke="#222" fill="none"/><path d="M46 420 L51 426" stroke="#c03030" stroke-width="1.500"/>
<rect x="39" y="444" width="13" height="10" fill="none" stroke="#222" stroke-width="1.200"/><circle cx="39" cy="444" r="1.400" fill="#c02020"/><circle cx="52" cy="454" r="1.400" fill="#c02020"/>
<path d="M41 466 H49 L52 472 L49 478 H41 L38 472Z" fill="none" stroke="#222"/><circle cx="45" cy="472" r="1.300" fill="#c02020"/>
<path d="M29 487.500 H63" stroke="#cfcbb8"/>
<ellipse cx="45" cy="501" rx="7" ry="4.500" fill="none" stroke="#222" stroke-width="1.100"/><circle cx="45" cy="501" r="1.200" fill="#c02020"/>
<path d="M38 517 H52 M38 517 V531" stroke="#7a8ab8"/><path d="M52 517 C45 519 41 523 40 525 C42 528 47 531 52 532" stroke="#222" fill="none"/><circle cx="46" cy="524" r="1.300" fill="#c02020"/>
<path d="M38 541 L44 547 L38 553" stroke="#7a8ab8" fill="none"/><path d="M52 541 L44 547 L52 553" stroke="#222" fill="none"/>
<path d="M38 575 L52 575 L48 569 L45 562 L42 569Z" fill="#e8d040"/><ellipse cx="45" cy="573" rx="7" ry="3" fill="#6a8ac8"/>
<ellipse cx="45" cy="589" rx="7" ry="2.500" fill="none" stroke="#556"/><ellipse cx="45" cy="593" rx="7" ry="2.500" fill="none" stroke="#556"/><ellipse cx="45" cy="597" rx="7" ry="2.500" fill="none" stroke="#556"/>
<text x="37" y="614" font-family="Liberation Sans" font-weight="700" font-size="7.500" fill="#c02020">XYZ=</text><path d="M38 621 C42 617 47 624 52 619" stroke="#222" fill="none"/>
<path d="M39 635 L44 632 L49 635 L53 639 L51 645 H39Z" fill="#f0e8e0" stroke="#7a3030"/>
<path d="M33 662 L39 658 L43 664 L47 660" stroke="#a84040" fill="none" stroke-width="1.400"/><circle cx="39" cy="658" r="1.600" fill="#2a9a2a"/><circle cx="43" cy="664" r="1.600" fill="#c02020"/><use href="#ad" x="55" y="662"/>
<path d="M33 679 H46" stroke="#222"/><path d="M39 679 V684" stroke="#d07020" stroke-width="2"/><path d="M32 690 L38 684 L46 685 L46 691 H32Z" fill="#6a94d8"/><use href="#ad" x="55" y="685"/>
<path d="M41 703 L50 713 L45 715Z" fill="#ece040" stroke="#cfc040" stroke-width=".6"/>
<use href="#al" x="33" y="725"/>

<!-- right bar icons -->
<rect x="1415" y="177" width="7" height="7" fill="#e8e070" stroke="#666"/><path d="M1420 181 H1431 M1420 184 V192 H1425" stroke="#333" fill="none"/><rect x="1422" y="188" width="5" height="5" fill="#e8e070" stroke="#7a9a50"/><path d="M1427 192 h4" stroke="#444"/>
<rect x="1416" y="214" width="4" height="7" fill="#e8a8a8" stroke="#8a5050"/><path d="M1420 218 H1431 M1418 222 V229 H1423" stroke="#333" fill="none"/><rect x="1423" y="226" width="4" height="4" fill="#e8e8e0" stroke="#888"/>
<path d="M1417 259 H1426 L1430 263 V276 H1417Z" fill="#f8f6e0" stroke="#b8a860"/><circle cx="1423" cy="268" r="4" fill="#3f80c8"/><path d="M1420 267 L1424 265 L1425 269Z" fill="#48a848"/>
<path d="M1415 300 L1423 296 L1431 300 L1423 304Z" fill="#3c4458"/><path d="M1419 302 V305 H1427 V302" fill="#555e70"/><path d="M1419 304 L1421 310" stroke="#c03030" stroke-width="1.500"/>
<rect x="1417.500" y="327.500" width="11" height="13" rx="1" fill="#f8f6e0" stroke="#b8a860"/><text x="1419.500" y="339" font-family="Liberation Sans" font-weight="700" font-size="12" fill="#1a2a8a">?</text><path d="M1426 340 L1430 344" stroke="#888" stroke-width="1.200"/>
<circle cx="1423" cy="381" r="7" fill="#d8d8d8" stroke="#8a8a94"/><path d="M1423 376 V381 L1426 383" stroke="#555" fill="none"/>
<rect x="1415" y="408" width="14" height="13" fill="#e8ece8" stroke="#7a8a98"/><path d="M1422 408 V421" stroke="#7a8a98"/><path d="M1424 411h3M1424 414h3M1424 417h3" stroke="#444"/><circle cx="1418" cy="412" r="1" fill="#c03030"/><circle cx="1418" cy="416" r="1" fill="#2a6a2a"/>
<path d="M1419 442 V456" stroke="#2a4a98" stroke-width="2.500"/><path d="M1420 449 L1430 443 M1420 449 L1430 456" stroke="#1a1a3a" stroke-width="2"/><path d="M1417 455 h4 v3 h-4z" fill="#e8c040"/>
<circle cx="1418" cy="483" r="3" fill="#e0b070"/><path d="M1414 491 C1414 486 1421 486 1422 491Z" fill="#8a3a98"/><circle cx="1427" cy="479" r="3" fill="#e0b070"/><path d="M1423 488 C1423 482 1431 482 1431 488Z" fill="#2a8a3a"/>
<rect x="1424" y="512" width="7" height="10" rx="2" fill="#ecc840"/><path d="M1415 517 L1423 511 L1423 523Z" fill="#3f88e0"/>

<!-- taskbar icons -->
<g transform="translate(16,884)"><path d="M-4 -6 C-2 -7 -1 -6 0 -5 L-1 -1 C-3 -2 -5 -2 -6 -2Z" fill="#e05a28"/><path d="M1 -5 C3 -4 5 -4 7 -5 L6 -1 C4 0 2 0 0 -1Z" fill="#7cc04a"/><path d="M-6 -1 C-4 -1 -3 -1 -2 0 L-3 5 C-4 4 -6 4 -8 4Z" fill="#4a88d8"/><path d="M-1 1 C1 2 3 2 5 1 L4 6 C2 6 0 6 -2 5Z" fill="#f0c830"/></g>
<g transform="translate(117,885)"><circle r="5.500" fill="none" stroke="#6ac0f0" stroke-width="2.500"/><path d="M-5 0 H5" stroke="#6ac0f0" stroke-width="1.500"/><path d="M-7 5 C-3 3 2 -3 6 -7" stroke="#c8e6fa" fill="none"/></g>
<g transform="translate(140,885)"><rect x="-6" y="-6" width="12" height="12" rx="3" fill="#e8eef8"/><circle r="3.500" fill="none" stroke="#2a60b8" stroke-width="2"/></g>
<path d="M187 883 H193 L190 887Z" fill="#fff"/>
<g transform="translate(207,884)"><circle r="7" fill="#d86a1a"/><circle r="3.500" fill="#2a3a88"/><path d="M-6 -3 C-2 -8 4 -7 7 -2 C4 -4 1 -4 -1 -2Z" fill="#f0b020"/></g>
<path d="M223 877 l3 3 l-3 3 M227 877 l3 3 l-3 3" stroke="#a8c8f0" fill="none"/>
<g transform="translate(260,885)"><path d="M-7 -5 L0 1 L7 -7 L2 7 L-4 6Z" fill="#d62828"/><path d="M-7 -5 L0 1 L-4 6Z" fill="#e8e8f0"/><path d="M1 -1 L7 -7 L3 5Z" fill="#e8c850"/></g>
<rect x="1185" y="882" width="15" height="9" rx="1" fill="#eee" stroke="#222"/><path d="M1187 885h11M1187 887h11" stroke="#333" stroke-dasharray="1 1"/>
<g transform="translate(1238,885)"><path d="M-7 -6 H7 V6 H-7Z" fill="#e8a060"/><rect x="-2" y="-2" width="6" height="8" fill="#d83a30"/><rect x="2" y="1" width="5" height="5" fill="#ddd"/></g>
<g transform="translate(1255,885)"><rect x="-3" y="-7" width="9" height="8" fill="#8aa0d8" stroke="#223"/><rect x="-7" y="-1" width="9" height="7" fill="#5a70b0" stroke="#223"/></g>
<g transform="translate(1274,885)"><rect x="-7" y="-7" width="9" height="8" fill="#4a60a8"/><path d="M3 -6 L9 6 H-3Z" fill="#f0d020" stroke="#332"/><path d="M3 -2 V3" stroke="#222"/></g>
<g transform="translate(1292,885)"><path d="M-6 -2 H-2 L3 -7 V7 L-2 2 H-6Z" fill="#d84030"/><path d="M5 -4 C7 -2 7 2 5 4" stroke="#222" fill="none"/></g>
<path d="M1305 892 C1307 886 1312 882 1316 880 M1310 890 L1306 888" stroke="#1a5ab8" stroke-width="1.500" fill="none"/>
<g transform="translate(1327,884)"><path d="M-7 -7 L-1 -7 L-3 -2 L3 -7 L6 -7 L0 -1 L-7 7Z" fill="#e0102a"/><path d="M1 1 L7 7 L2 7 L-2 4Z" fill="#111"/></g>
<rect x="1339" y="878" width="15" height="13" rx="1" fill="#6cc85a" stroke="#d8e8a8"/><path d="M1340 883 H1353 M1344 887 H1349" stroke="#fff"/>
<path d="M1358 879 H1370 V887 C1370 890 1366 892 1364 893 C1362 892 1358 890 1358 887Z" fill="#4cb048" stroke="#e8f0d8"/><path d="M1361 885 h6 M1364 882 v6" stroke="#fff" stroke-width="1.500"/>
<circle cx="1380" cy="884" r="5.500" fill="#b8b8b0" stroke="#445"/><circle cx="1380" cy="884" r="2" fill="#445"/><path d="M1384 892 L1390 884" stroke="#7ab0e8"/>
</svg>

<!-- title -->
<div class="t" style="left:22px;top:5px;font:700 13.3px/16px 'Liberation Mono','WenQuanYi Zen Hei',monospace;color:#fff">NX 4 - Modeling - [20.prt （修改的） ]</div>
<!-- menu -->
<div class="t m" style="left:29px;top:30px">文件(F)</div><div class="t m" style="left:84px;top:30px">编辑(E)</div><div class="t m" style="left:139px;top:30px">视图(V)</div><div class="t m" style="left:194px;top:30px">插入(S)</div><div class="t m" style="left:249px;top:30px">格式(R)</div><div class="t m" style="left:304px;top:30px">工具(T)</div><div class="t m" style="left:359px;top:30px">装配(A)</div><div class="t m" style="left:414px;top:30px">信息(I)</div><div class="t m" style="left:469px;top:30px">分析(L)</div><div class="t m" style="left:524px;top:30px">首选项(P)</div><div class="t m" style="left:591px;top:30px">窗口(O)</div><div class="t m" style="left:646px;top:30px">帮助(H)</div>
<div class="t" style="left:31px;top:56px">起始</div>
<div class="t" style="left:608px;top:58px;font-family:'Liberation Mono',monospace">1</div>
<!-- feature labels -->
<div class="t c" style="left:36px;top:101px">草图</div><div class="t c" style="left:102px;top:101px">拉伸</div><div class="t c" style="left:162px;top:101px">回转</div><div class="t c" style="left:222px;top:101px">沿导引线</div><div class="t c" style="left:222px;top:113px">扫掠</div><div class="t c" style="left:288px;top:101px">长方体</div><div class="t c" style="left:348px;top:101px">圆柱</div><div class="t c" style="left:408px;top:101px">圆锥</div><div class="t c" style="left:468px;top:101px">球</div><div class="t c" style="left:551px;top:101px">求和</div><div class="t c m" style="left:551px;top:114px">(U)...</div><div class="t c" style="left:623px;top:101px">基准平面</div><div class="t c m" style="left:623px;top:114px">(D)...</div><div class="t c" style="left:694px;top:101px">拔模角</div><div class="t c" style="left:755px;top:101px">边倒圆</div><div class="t c" style="left:814px;top:101px">倒斜角</div><div class="t c" style="left:874px;top:101px">外壳</div><div class="t c" style="left:934px;top:101px">孔</div><div class="t c" style="left:1000px;top:101px">修剪体</div><div class="t c" style="left:1060px;top:101px">实例特征</div>
<!-- status -->
<div class="t" style="left:2px;top:135px;font-size:13px;font-weight:700;color:#000">选择对象并使用 MB3，或者双击某一对象</div>
<!-- annotation -->
<div class="t" style="left:172px;top:434px;font:300 28.500px/34px 'Noto Serif CJK SC','Liberation Serif',serif;color:#e82020">怎么回事<span style="font-family:'Liberation Serif'">?</span></div>
<!-- taskbar text -->
<div class="t" style="left:36px;top:874px;font:italic 18px/22px 'WenQuanYi Zen Hei','Noto Sans CJK SC',sans-serif;color:#fff">开始</div>
<div class="t" style="left:159px;top:878px;color:#fff">工具</div>
<div class="t" style="left:272px;top:879px;font:10.300px/14px 'Liberation Mono',monospace;color:#fff">NX 4 - Modeling ...</div>
<div class="t" style="left:1396px;top:878px;font-size:11px;color:#d0e8fa;letter-spacing:.3px">20:35</div>
</body></html>
